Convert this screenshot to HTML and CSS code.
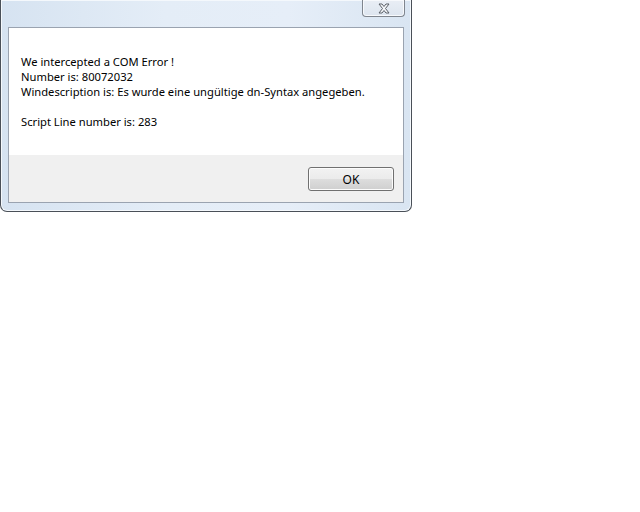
FILE: index.html
```html
<!DOCTYPE html>
<html>
<head>
<meta charset="utf-8">
<link rel="stylesheet" href="styles.css">
</head>
<body>
<div class="window">
  <div class="close-btn">
    <svg width="14" height="11" viewBox="0 0 14 11">
      <path d="M2 1 L5 1 L7 3.5 L9 1 L12 1 L8.5 5.5 L12 10 L9 10 L7 7.5 L5 10 L2 10 L5.5 5.5 Z" fill="#f4f6f9" stroke="#5b6068" stroke-width="1" stroke-linejoin="round"/>
    </svg>
  </div>
  <div class="client">
    <div class="message">
      <p>We intercepted a COM Error !</p>
      <p>Number is: 80072032</p>
      <p>Windescription is: Es wurde eine ungültige dn-Syntax angegeben.</p>
      <p class="gap">Script Line number is: 283</p>
    </div>
    <div class="footer">
      <button class="ok">OK</button>
    </div>
  </div>
</div>
</body>
</html>
```
FILE: styles.css
```css
html, body {
  margin: 0;
  padding: 0;
  background: #ffffff;
}

.window {
  position: relative;
  width: 412px;
  height: 212px;
  box-sizing: border-box;
  border: 1px solid #4a5058;
  border-top: none;
  border-radius: 0 0 7px 7px;
  background: linear-gradient(to right, #d6e3f1 0%, #e4edf7 40%, #e6eef8 70%, #d9e5f2 100%);
  padding: 27px 7px 8px 7px;
  box-shadow: inset 0 0 0 1px #f4f8fc;
}

.close-btn {
  position: absolute;
  left: 361px;
  top: 0;
  width: 43px;
  height: 17px;
  box-sizing: border-box;
  border: 1px solid #7f858e;
  border-top: none;
  border-radius: 0 0 4px 4px;
  background: linear-gradient(to bottom, #e9eef5, #dde5ef);
  box-shadow: inset 0 0 0 1px #f7f9fc;
  display: flex;
  align-items: center;
  justify-content: center;
}

.close-btn svg {
  display: block;
}

.client {
  border: 1px solid #9aa3b0;
  display: flex;
  flex-direction: column;
  height: 176px;
  box-sizing: border-box;
}

.message {
  background: #ffffff;
  height: 127px;
  box-sizing: border-box;
  padding: 26px 12px 0 12px;
  font-family: "Noto Sans", "Open Sans", sans-serif;
  font-size: 11.2px;
  line-height: 15px;
  color: #000000;
}

.message p {
  margin: 0;
}

.message p.gap {
  margin-top: 15px;
}

.footer {
  flex: 1;
  background: #f0f0f0;
  display: flex;
  justify-content: flex-end;
  align-items: flex-start;
  padding: 12px 9px 0 0;
}

.ok {
  width: 86px;
  height: 24px;
  box-sizing: border-box;
  border: 1px solid #707070;
  border-radius: 3px;
  background: linear-gradient(to bottom, #f2f2f2 0%, #ebebeb 50%, #dddddd 51%, #cfcfcf 100%);
  box-shadow: inset 0 0 0 1px #fcfcfc;
  font-family: "Noto Sans", "Open Sans", sans-serif;
  font-size: 12px;
  color: #000000;
  padding: 0;
}
```
